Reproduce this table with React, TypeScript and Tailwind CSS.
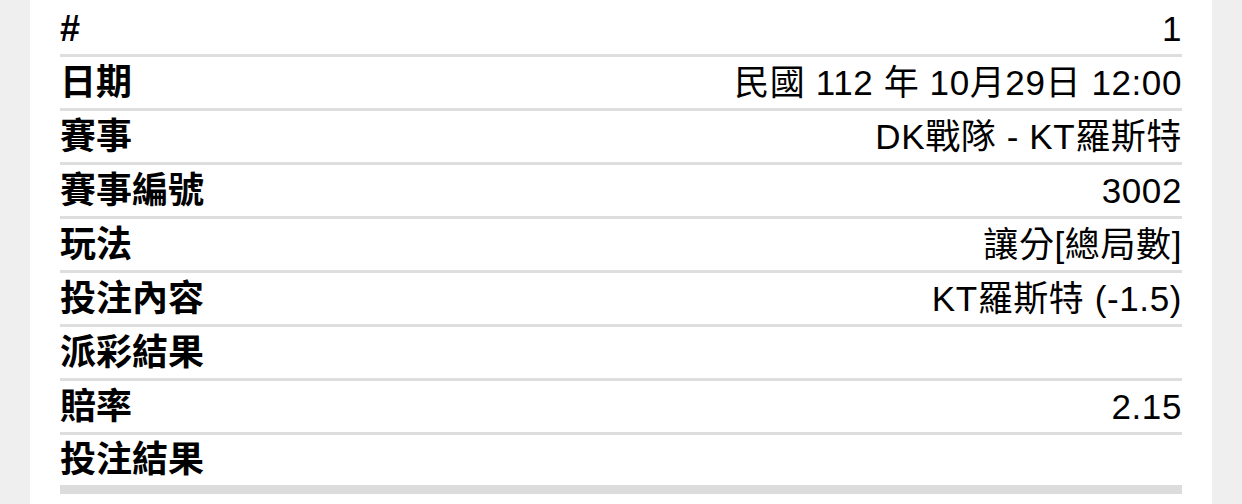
const rows: { label: string; value: string }[] = [
  { label: "#", value: "1" },
  { label: "日期", value: "民國 112 年 10月29日 12:00" },
  { label: "賽事", value: "DK戰隊 - KT羅斯特" },
  { label: "賽事編號", value: "3002" },
  { label: "玩法", value: "讓分[總局數]" },
  { label: "投注內容", value: "KT羅斯特 (-1.5)" },
  { label: "派彩結果", value: "" },
  { label: "賠率", value: "2.15" },
  { label: "投注結果", value: "" },
];

export default function App() {
  return (
    <div
      className="min-h-screen bg-[#efefef] px-[30px]"
      style={{ fontFamily: '"Liberation Sans", "Noto Sans CJK TC", sans-serif' }}
    >
      <div className="h-[504px] bg-white px-[30px] pt-[3px]">
        {rows.map((row, i) => (
          <div
            key={row.label}
            className={
              i === rows.length - 1
                ? "flex h-[59px] items-center justify-between border-b-[9px] border-[#dcdcdc] text-[35px] leading-none text-black"
                : "flex h-[54px] items-center justify-between border-b-[3px] border-[#dedede] text-[35px] leading-none text-black"
            }
          >
            <span className="text-[36px] font-bold">{row.label}</span>
            <span className="tracking-[0.6px]">{row.value}</span>
          </div>
        ))}
      </div>
    </div>
  );
}
